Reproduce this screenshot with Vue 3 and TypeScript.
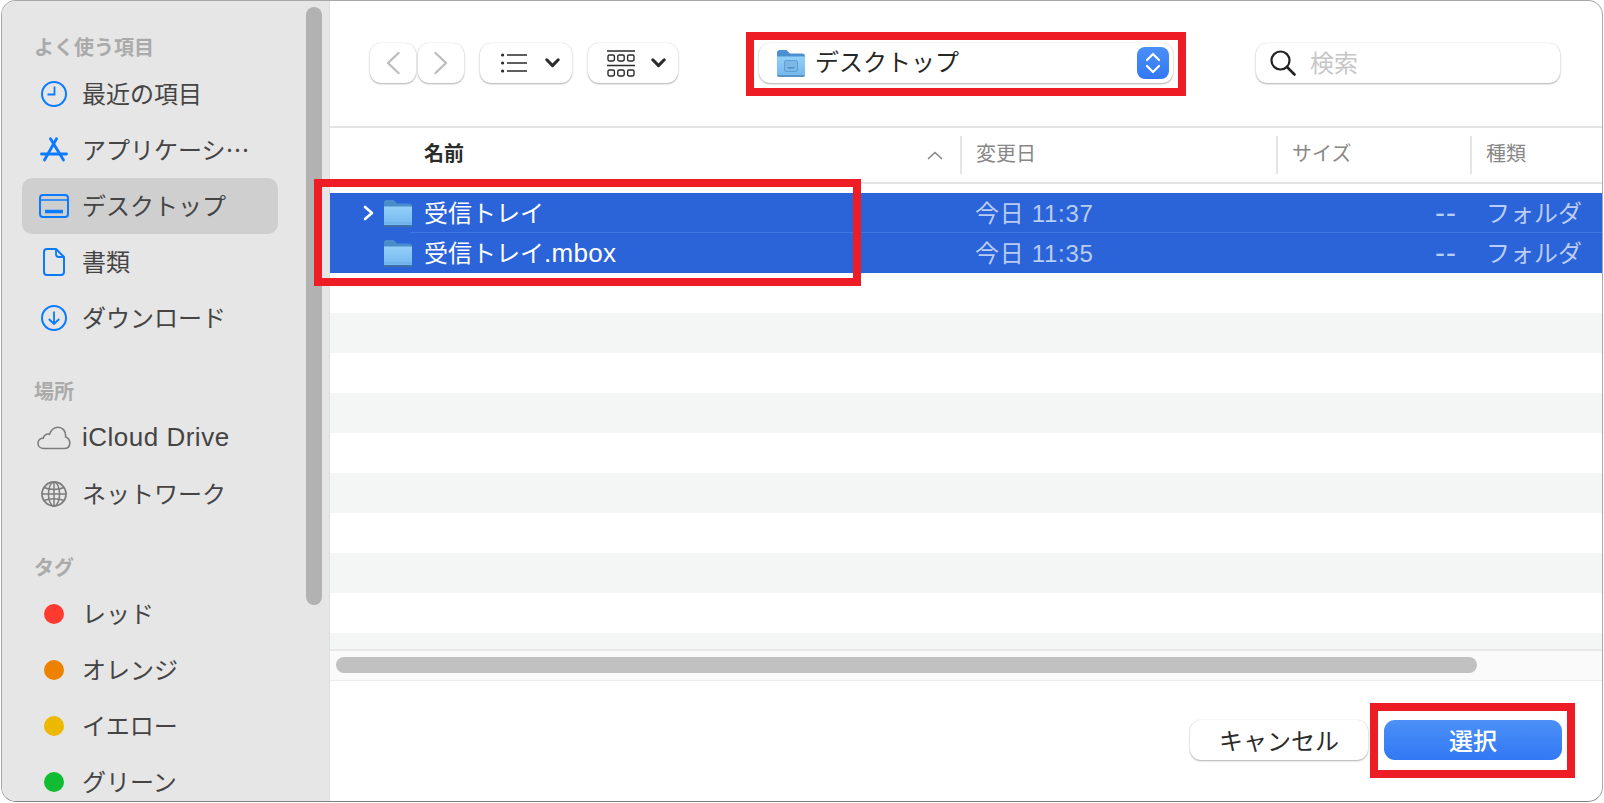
<script setup lang="ts">
interface SideItem {
  label: string;
  icon?: string;
  dot?: string;
  active?: boolean;
  latin?: boolean;
}

interface SideGroup {
  title: string;
  items: SideItem[];
}

const groups: SideGroup[] = [
  {
    title: 'よく使う項目',
    items: [
      { label: '最近の項目', icon: 'clock' },
      { label: 'アプリケーシ…', icon: 'apps' },
      { label: 'デスクトップ', icon: 'desktop', active: true },
      { label: '書類', icon: 'doc' },
      { label: 'ダウンロード', icon: 'download' }
    ]
  },
  {
    title: '場所',
    items: [
      { label: 'iCloud Drive', icon: 'cloud', latin: true },
      { label: 'ネットワーク', icon: 'globe' }
    ]
  },
  {
    title: 'タグ',
    items: [
      { label: 'レッド', dot: '#ff3b30' },
      { label: 'オレンジ', dot: '#ec8200' },
      { label: 'イエロー', dot: '#ecb800' },
      { label: 'グリーン', dot: '#12bc32' }
    ]
  }
];

const files = [
  { name: '受信トレイ', ext: '', date: '今日 11:37', expandable: true },
  { name: '受信トレイ', ext: '.mbox', date: '今日 11:35', expandable: false }
];

const emptyRows = 10;
</script>

<template>
  <div class="page">
    <div class="window">
      <aside class="sidebar">
        <section v-for="group in groups" :key="group.title" class="group">
          <h3>{{ group.title }}</h3>
          <div v-for="item in group.items" :key="item.label" class="side-row" :class="{ active: item.active }">
            <span class="side-icon">
              <i v-if="item.dot" class="dot" :style="{ backgroundColor: item.dot }"></i>
              <svg v-else-if="item.icon === 'clock'" width="28" height="28" viewBox="0 0 28 28" fill="none" stroke="#0a7aff" stroke-width="2">
                <circle cx="14" cy="14" r="12" />
                <path d="M14.5 6.5V14.5H7.5" stroke-width="1.8" />
              </svg>
              <svg v-else-if="item.icon === 'apps'" width="28" height="26" viewBox="0 0 28 26" fill="none" stroke="#0a7aff" stroke-width="2.8" stroke-linecap="round">
                <path d="M10.5 1.8L23.5 23" />
                <path d="M16.5 1.8L4.5 23" />
                <path d="M1.5 17H26.5" />
              </svg>
              <svg v-else-if="item.icon === 'desktop'" width="30" height="24" viewBox="0 0 30 24" fill="none" stroke="#0a7aff" stroke-width="2">
                <rect x="1" y="1" width="28" height="22" rx="3" />
                <path d="M1 6H29" stroke-width="1.6" />
                <path d="M6 17.5H24" stroke-width="3.4" />
              </svg>
              <svg v-else-if="item.icon === 'doc'" width="22" height="28" viewBox="0 0 22 28" fill="none" stroke="#0a7aff" stroke-width="2">
                <path d="M4 1H13L21 9V24A3 3 0 0 1 18 27H4A3 3 0 0 1 1 24V4A3 3 0 0 1 4 1Z" />
                <path d="M13 1V6A3 3 0 0 0 16 9H21" stroke-width="1.8" />
              </svg>
              <svg v-else-if="item.icon === 'download'" width="28" height="28" viewBox="0 0 28 28" fill="none" stroke="#0a7aff" stroke-width="2">
                <circle cx="14" cy="14" r="12" />
                <path d="M14 7.5V20M8.8 15L14 20L19.2 15" stroke-width="1.8" />
              </svg>
              <svg v-else-if="item.icon === 'cloud'" width="34" height="24" viewBox="0 0 34 24" fill="none" stroke="#7d7d7d" stroke-width="1.6">
                <path d="M7 22.5C3.5 22.5 1 20.2 1 17.2C1 14.2 3.3 12.2 6.2 12.1C7.4 8.9 10 7.5 12.6 8.2C14.2 3.6 17.6 1.2 21 1.2C25.6 1.2 28.6 4.8 28.6 9.6V11C31.2 12 32.8 14.2 32.8 17C32.8 20.4 30.4 22.5 27 22.5Z" />
              </svg>
              <svg v-else-if="item.icon === 'globe'" width="28" height="28" viewBox="0 0 28 28" fill="none" stroke="#7d7d7d" stroke-width="1.5">
                <circle cx="14" cy="14" r="12" stroke-width="1.8" />
                <ellipse cx="14" cy="14" rx="5.6" ry="12" />
                <path d="M14 2V26" />
                <path d="M4 7.5C9 10 19 10 24 7.5" />
                <path d="M2 14H26" />
                <path d="M4 20.5C9 18 19 18 24 20.5" />
              </svg>
            </span>
            <span class="side-label" :class="{ latin: item.latin }">{{ item.label }}</span>
          </div>
        </section>
        <div class="side-scroll"></div>
      </aside>

      <main class="main">
        <div class="toolbar">
          <div class="btn nav">
            <svg width="14" height="24" viewBox="0 0 14 24" fill="none" stroke="#bdbdbd" stroke-width="2.4" stroke-linecap="round" stroke-linejoin="round">
              <path d="M12.5 2L2 12L12.5 22" />
            </svg>
          </div>
          <div class="btn nav next">
            <svg width="14" height="24" viewBox="0 0 14 24" fill="none" stroke="#bdbdbd" stroke-width="2.4" stroke-linecap="round" stroke-linejoin="round">
              <path d="M1.5 2L12 12L1.5 22" />
            </svg>
          </div>
          <div class="btn view list-btn">
            <svg width="26" height="20" viewBox="0 0 26 20" fill="none" stroke="#2b2b2b" stroke-width="1.7">
              <path d="M6 2H26M6 10H26M6 18H26" />
              <circle cx="1.6" cy="2" r="1.6" fill="#2b2b2b" stroke="none" />
              <circle cx="1.6" cy="10" r="1.6" fill="#2b2b2b" stroke="none" />
              <circle cx="1.6" cy="18" r="1.6" fill="#2b2b2b" stroke="none" />
            </svg>
            <svg width="15" height="10" viewBox="0 0 15 10" fill="none" stroke="#2b2b2b" stroke-width="3" stroke-linecap="round" stroke-linejoin="round">
              <path d="M1.8 1.8L7.5 7.6L13.2 1.8" />
            </svg>
          </div>
          <div class="btn view grid-btn">
            <svg width="28" height="27" viewBox="0 0 28 27" fill="none" stroke="#2b2b2b" stroke-width="1.4">
              <path d="M0 1H28M0 15.5H28" />
              <rect x="1" y="5" width="6.4" height="6" rx="1.4" />
              <rect x="10.8" y="5" width="6.4" height="6" rx="1.4" />
              <rect x="20.6" y="5" width="6.4" height="6" rx="1.4" />
              <rect x="1" y="20" width="6.4" height="6" rx="1.4" />
              <rect x="10.8" y="20" width="6.4" height="6" rx="1.4" />
              <rect x="20.6" y="20" width="6.4" height="6" rx="1.4" />
            </svg>
            <svg width="15" height="10" viewBox="0 0 15 10" fill="none" stroke="#2b2b2b" stroke-width="3" stroke-linecap="round" stroke-linejoin="round">
              <path d="M1.8 1.8L7.5 7.6L13.2 1.8" />
            </svg>
          </div>
          <div class="btn path">
            <svg width="28" height="27" viewBox="0 0 28 27">
              <defs>
                <linearGradient id="folderBody" x1="0" y1="0" x2="0" y2="1">
                  <stop offset="0" stop-color="#93cff8" />
                  <stop offset="1" stop-color="#72b6ee" />
                </linearGradient>
              </defs>
              <path d="M0 3A3 3 0 0 1 3 0H9.5L13 3.5H25A3 3 0 0 1 28 6.5V10H0Z" fill="#4b8fd0" />
              <path d="M0 6.5H28V24A3 3 0 0 1 25 27H3A3 3 0 0 1 0 24Z" fill="url(#folderBody)" />
              <path d="M0 25H28V24.5A2.5 2.5 0 0 1 25.5 27H2.5A2.5 2.5 0 0 1 0 24.5Z" fill="#5a93c6" />
              <rect x="7.5" y="10.5" width="13" height="11" rx="1.6" fill="#7db7e6" stroke="#5f9dd2" stroke-width="1" />
              <path d="M10.5 17.8H17.5" stroke="#4f8ec6" stroke-width="1.4" />
            </svg>
            <span class="path-label">デスクトップ</span>
            <span class="stepper">
              <svg width="16" height="24" viewBox="0 0 16 24" fill="none" stroke="#fff" stroke-width="2.2" stroke-linecap="round" stroke-linejoin="round">
                <path d="M2 9L8 3L14 9M2 15L8 21L14 15" />
              </svg>
            </span>
          </div>
          <div class="btn search">
            <svg width="26" height="26" viewBox="0 0 26 26" fill="none" stroke="#222" stroke-width="2.2" stroke-linecap="round">
              <circle cx="10.5" cy="10.5" r="9" />
              <path d="M17 17L24.5 24.5" stroke-width="2.6" />
            </svg>
            <span class="search-label">検索</span>
          </div>
        </div>

        <div class="head">
          <div class="head-name">
            <strong>名前</strong>
            <svg width="16" height="9" viewBox="0 0 16 9" fill="none" stroke="#8a8a8a" stroke-width="1.7" stroke-linecap="round" stroke-linejoin="round">
              <path d="M1.5 7.5L8 1.5L14.5 7.5" />
            </svg>
          </div>
          <div class="head-col">変更日</div>
          <div class="head-col">サイズ</div>
          <div class="head-col">種類</div>
        </div>

        <div class="list">
          <div v-for="file in files" :key="file.date" class="file-row">
            <div class="cell-name">
              <span class="disclosure">
                <svg v-if="file.expandable" width="11" height="16" viewBox="0 0 11 16" fill="none" stroke="#fff" stroke-width="2.6" stroke-linecap="round" stroke-linejoin="round">
                  <path d="M2 2L9 8L2 14" />
                </svg>
              </span>
              <svg class="folder" width="28" height="27" viewBox="0 0 28 27">
                <path d="M0 3A3 3 0 0 1 3 0H9.5L13 3.5H25A3 3 0 0 1 28 6.5V10H0Z" fill="#4b8ccb" />
                <path d="M0 6.5H28V24A3 3 0 0 1 25 27H3A3 3 0 0 1 0 24Z" fill="url(#folderBody)" />
                <path d="M0 22.5H28V23.5H0Z" fill="#69a9de" />
                <path d="M0 25H28V24.5A2.5 2.5 0 0 1 25.5 27H2.5A2.5 2.5 0 0 1 0 24.5Z" fill="#3f6fa5" />
              </svg>
              <span class="file-name">{{ file.name }}<span class="file-ext">{{ file.ext }}</span></span>
            </div>
            <div class="cell-date">{{ file.date }}</div>
            <div class="cell-size">--</div>
            <div class="cell-kind">フォルダ</div>
          </div>
          <div v-for="n in emptyRows" :key="n" class="empty-row" :class="{ stripe: n % 2 === 0 }"></div>
        </div>

        <div class="hscroll">
          <div class="hscroll-thumb"></div>
        </div>

        <footer class="footer">
          <button class="action cancel">キャンセル</button>
          <button class="action confirm">選択</button>
        </footer>
      </main>
    </div>

    <div class="mark mark-path"></div>
    <div class="mark mark-files"></div>
    <div class="mark mark-confirm"></div>
  </div>
</template>

<style>
html,
body {
  margin: 0;
  background: #fff;
}
</style>

<style scoped>
.page {
  position: relative;
  width: 1604px;
  height: 803px;
  overflow: hidden;
  font-family: "Liberation Sans", "Noto Sans CJK JP", sans-serif;
  color: #2b2b2b;
}

.window {
  display: flex;
  box-sizing: border-box;
  width: 1602px;
  height: 802px;
  margin-left: 1px;
  border: 1px solid #a8a8a8;
  border-bottom-color: #808080;
  border-radius: 15px;
  overflow: hidden;
  background: #fff;
}

.sidebar {
  position: relative;
  flex: none;
  box-sizing: border-box;
  width: 328px;
  padding-top: 27px;
  background: #e6e6e6;
  border-right: 1px solid #dedede;
  overflow: hidden;
}

.group {
  margin-bottom: 26px;
}

.group h3 {
  margin: 0;
  padding-left: 32px;
  height: 38px;
  font-size: 20px;
  font-weight: 700;
  line-height: 38px;
  color: #aaa;
  font-family: "Noto Sans CJK JP", sans-serif;
}

.side-row {
  display: flex;
  align-items: center;
  margin: 0 51px 0 20px;
  height: 56px;
  border-radius: 10px;
}

.side-row.active {
  background: #cfcfcf;
}

.side-icon {
  flex: none;
  display: flex;
  align-items: center;
  justify-content: center;
  width: 64px;
  margin-right: -4px;
}

.side-label {
  padding-bottom: 4px;
  font-family: "Noto Sans CJK JP", sans-serif;
  font-size: 24px;
  color: #444;
  white-space: nowrap;
}

.side-label.latin {
  padding-bottom: 2px;
  font-family: "Liberation Sans", sans-serif;
  font-size: 26px;
  letter-spacing: 0.5px;
}

.dot {
  display: block;
  width: 20px;
  height: 20px;
  border-radius: 50%;
}

.side-scroll {
  position: absolute;
  top: 6px;
  left: 304px;
  width: 16px;
  height: 598px;
  border-radius: 8px;
  background: #b2b2b2;
}

.main {
  flex: 1;
  display: flex;
  flex-direction: column;
  min-width: 0;
}

.toolbar {
  flex: none;
  display: flex;
  box-sizing: border-box;
  height: 127px;
  padding: 42px 0 0 40px;
  border-bottom: 2px solid #e4e4e4;
}

.btn {
  display: flex;
  align-items: center;
  box-sizing: border-box;
  height: 40px;
  background: #fff;
  border-radius: 11px;
  box-shadow: 0 1px 2px rgba(0, 0, 0, 0.3), 0 0 1px rgba(0, 0, 0, 0.2);
}

.nav {
  justify-content: center;
  width: 46px;
}

.next {
  margin-left: 2px;
}

.view {
  justify-content: space-between;
  margin-left: 16px;
}

.list-btn {
  width: 92px;
  padding: 0 12px 0 21px;
}

.grid-btn {
  width: 90px;
  padding: 0 12px 0 19px;
}

.path {
  width: 414px;
  margin-left: 81px;
  padding: 0 4px 0 18px;
}

.path-label {
  flex: 1;
  margin-left: 10px;
  padding-bottom: 5px;
  font-family: "Noto Sans CJK JP", sans-serif;
  font-size: 24px;
  color: #262626;
}

.stepper {
  display: flex;
  align-items: center;
  justify-content: center;
  width: 32px;
  height: 32px;
  border-radius: 8px;
  background: linear-gradient(#4a8ff6, #3278f5);
}

.search {
  width: 304px;
  margin-left: 83px;
  padding-left: 14px;
}

.search-label {
  margin-left: 14px;
  padding-bottom: 4px;
  font-size: 24px;
  color: #c6c6c6;
}

.head,
.file-row {
  display: grid;
  grid-template-columns: 630px 316px 194px 1fr;
}

.head {
  flex: none;
  box-sizing: border-box;
  height: 56px;
  align-items: center;
  border-bottom: 2px solid #e4e4e4;
}

.head-name {
  display: flex;
  align-items: center;
  justify-content: space-between;
  padding: 0 17px 0 94px;
}

.head-name strong {
  margin-bottom: 4px;
  font-family: "Noto Sans CJK JP", sans-serif;
  font-size: 20px;
  font-weight: 700;
  line-height: 30px;
  color: #2b2b2b;
}

.head-col {
  box-sizing: border-box;
  height: 38px;
  padding-left: 14px;
  border-left: 2px solid #e4e4e4;
  font-size: 20px;
  line-height: 36px;
  color: #878787;
}

.list {
  flex: 1 1 0;
  padding-top: 9px;
  overflow: hidden;
  min-height: 0;
}

.file-row {
  position: relative;
  height: 40px;
  align-items: center;
  font-size: 24px;
  white-space: nowrap;
  background: #2b63d9;
  color: #b9cdf3;
}

.file-row > div {
  padding-bottom: 4px;
}

.file-row:first-child::after {
  content: "";
  position: absolute;
  left: 80px;
  right: 0;
  bottom: 0;
  height: 1px;
  background: #4076e4;
}

.cell-name {
  display: flex;
  align-items: center;
  padding-left: 33px;
  color: #fff;
}

.disclosure {
  flex: none;
  display: flex;
  width: 21px;
  margin-top: 4px;
}

.folder {
  flex: none;
  margin-top: 4px;
}

.file-name {
  margin-left: 12px;
}

.file-ext {
  font-size: 26px;
  letter-spacing: 0.3px;
}

.cell-date {
  padding-left: 15px;
  letter-spacing: 0.7px;
}

.file-row > .cell-size {
  padding: 0 13px 0 0;
  font-size: 30px;
  line-height: 36px;
  letter-spacing: 1px;
  text-align: right;
}

.cell-kind {
  padding-left: 16px;
}

.empty-row {
  height: 40px;
}

.stripe {
  background: #f4f5f5;
}

.hscroll {
  flex: none;
  box-sizing: border-box;
  height: 32px;
  padding: 6px 125px 0 6px;
  background: #fafafa;
  border-top: 2px solid #e8e8e8;
  border-bottom: 1px solid #ececec;
}

.hscroll-thumb {
  height: 16px;
  border-radius: 8px;
  background: #c1c1c1;
}

.footer {
  flex: none;
  display: flex;
  justify-content: flex-end;
  gap: 16px;
  height: 120px;
  box-sizing: border-box;
  padding: 39px 40px 0 0;
}

.action {
  width: 178px;
  height: 40px;
  padding: 0 0 2px;
  border: none;
  border-radius: 11px;
  font-family: "Noto Sans CJK JP", sans-serif;
  font-size: 24px;
}

.cancel {
  background: #fff;
  color: #2b2b2b;
  box-shadow: 0 1px 2px rgba(0, 0, 0, 0.3), 0 0 1px rgba(0, 0, 0, 0.2);
}

.confirm {
  background: linear-gradient(#4c90f7, #3278f5);
  color: #fff;
  font-weight: 500;
}

.mark {
  position: absolute;
  box-sizing: border-box;
  border: 8px solid #ee1c25;
  pointer-events: none;
}

.mark-path {
  left: 746px;
  top: 32px;
  width: 440px;
  height: 64px;
}

.mark-files {
  left: 314px;
  top: 179px;
  width: 547px;
  height: 107px;
}

.mark-confirm {
  left: 1370px;
  top: 703px;
  width: 205px;
  height: 75px;
}
</style>
